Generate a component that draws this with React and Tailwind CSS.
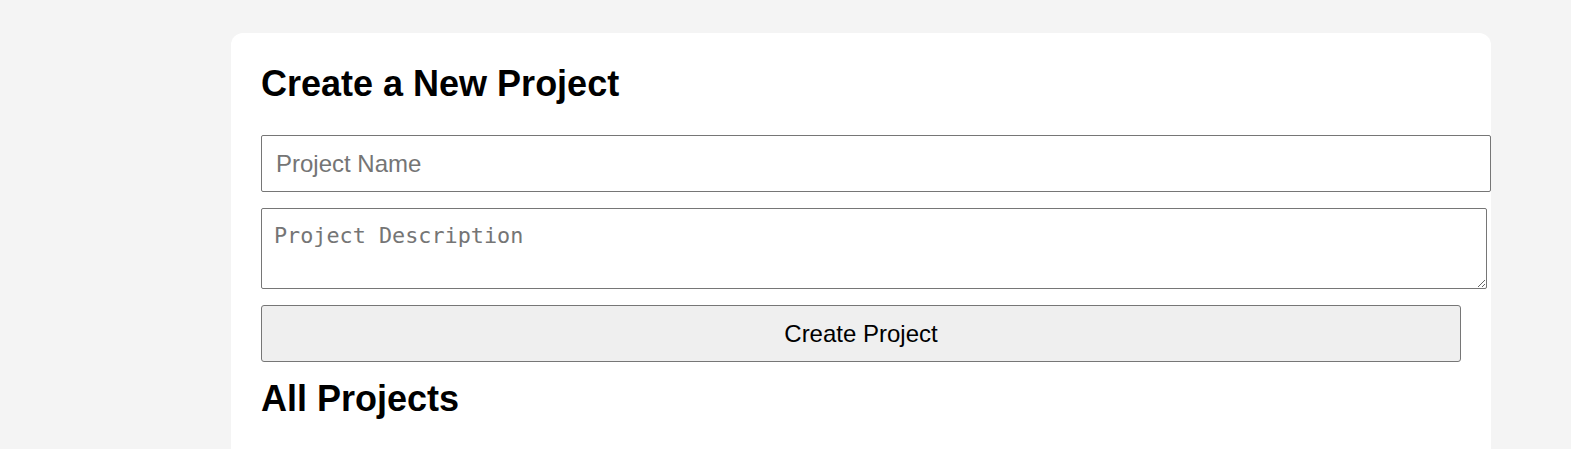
import { useState } from 'react';

function App() {
    const [name, setName] = useState('');
    const [description, setDescription] = useState('');

    const fieldBase = "block border border-[#767676] rounded-[2px] bg-white text-black outline-none placeholder:text-[#757575]";

    return (
        <div className="min-h-screen bg-[#f4f4f4] pt-[33px] font-['Liberation_Sans',Arial,sans-serif]">
            <div className="ml-[231px] w-[1260px] bg-white rounded-[12px] p-[30px] min-h-[600px]">
                <h2 className="text-[36px] leading-[41px] font-bold text-black mb-[31px]">Create a New Project</h2>

                {/* formulario */}
                <form onSubmit={(e) => e.preventDefault()}>
                    <input
                        type="text"
                        value={name}
                        onChange={(e) => setName(e.target.value)}
                        placeholder="Project Name"
                        className={`${fieldBase} w-[1230px] h-[57px] px-[14px] text-[24px] font-['Liberation_Sans',Arial,sans-serif]`}
                    />
                    <textarea
                        value={description}
                        onChange={(e) => setDescription(e.target.value)}
                        placeholder="Project Description"
                        className={`${fieldBase} mt-[16px] w-[1226px] h-[81px] px-[12px] pt-[13px] pb-[9px] text-[21.8px] leading-[28px] font-['DejaVu_Sans_Mono',monospace]`}
                    />
                    <button
                        type="submit"
                        className="block mt-[16px] w-[1200px] h-[57px] bg-[#efefef] border border-[#767676] rounded-[3px] text-[24px] text-black"
                    >
                        Create Project
                    </button>
                </form>

                <h2 className="mt-[16px] text-[36px] leading-[41px] font-bold text-black">All Projects</h2>
            </div>
        </div>
    );
}

export default App;
